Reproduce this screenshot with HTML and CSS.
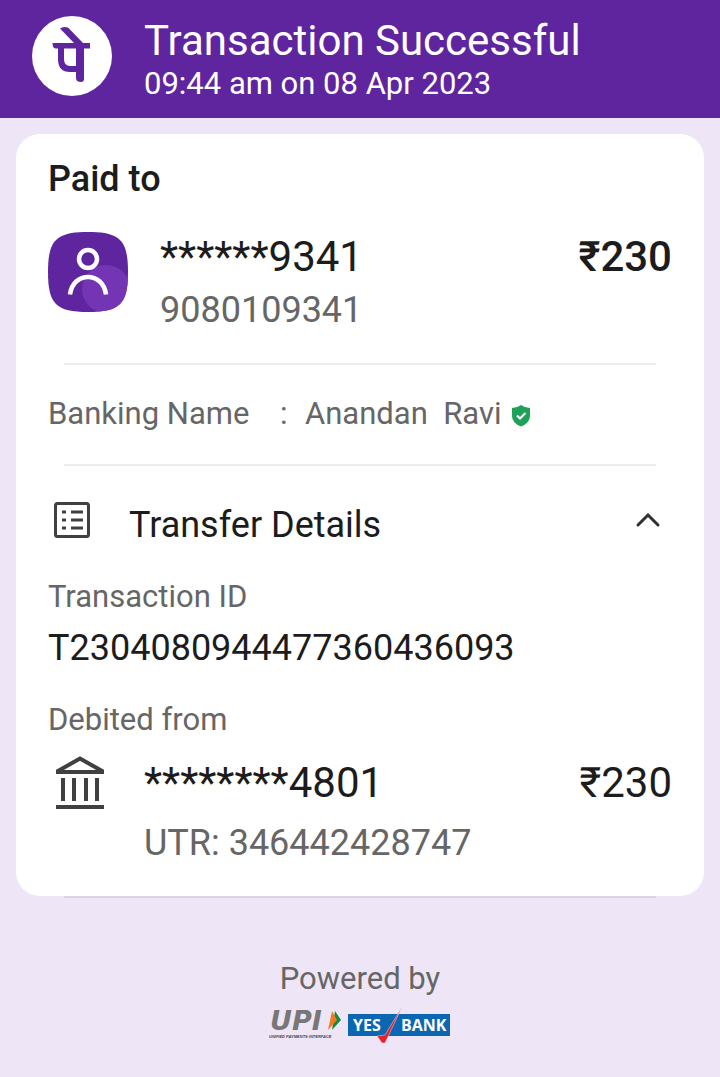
FILE: index.html
```html
<!DOCTYPE html>
<html lang="en">
<head>
<meta charset="utf-8">
<meta name="viewport" content="width=device-width, initial-scale=1">
<title>Transaction Successful</title>
<link rel="stylesheet" href="styles.css">
</head>
<body>
<header class="header">
  <svg class="logo" viewBox="0 0 80 80" aria-hidden="true">
    <circle cx="40" cy="40" r="40" fill="#fff"/>
    <path d="M28 12.500Q31 10 36 11.500L51 27H42Z" fill="#5f259f"/>
    <path d="M20.500 27H58V32.500H23.500Q20.500 32 20.500 27Z" fill="#5f259f"/>
    <path d="M29 32V43Q29 53 38 53H47" fill="none" stroke="#5f259f" stroke-width="6"/>
    <path d="M44 31H52V63Q52 66 49 66Q44 66 44 62Z" fill="#5f259f"/>
  </svg>
  <div class="heading">
    <h1 class="title">Transaction Successful</h1>
    <p class="time">09:44 am on 08 Apr 2023</p>
  </div>
</header>
<main class="card">
  <h2 class="label-strong">Paid to</h2>
  <section class="payee">
    <svg class="avatar" viewBox="0 0 80 80" aria-hidden="true">
      <defs><clipPath id="tile"><path d="M40 0C72 0 80 8 80 40S72 80 40 80S0 72 0 40S8 0 40 0Z"/></clipPath></defs>
      <g clip-path="url(#tile)">
        <rect width="80" height="80" fill="#5f259f"/>
        <circle cx="58" cy="57" r="24" fill="#7435b4"/>
      </g>
      <circle cx="40" cy="27" r="9" fill="none" stroke="#fff" stroke-width="4.500"/>
      <path d="M22 62.500C25 39 55 39 58 62.500" fill="none" stroke="#fff" stroke-width="4.500"/>
    </svg>
    <div class="info">
      <p class="name">******9341</p>
      <p class="sub">9080109341</p>
    </div>
    <p class="amount amount-strong">₹230</p>
  </section>
  <hr class="line">
  <section class="banking">
    <span class="banking-label">Banking Name</span>
    <span class="colon">:</span>
    <span class="banking-name">Anandan&nbsp; Ravi</span>
    <svg class="shield" viewBox="0 0 20 24" role="img" aria-label="Verified">
      <path d="M10 1Q14 4 19 4V12Q19 19 10 22.500Q1 19 1 12V4Q6 4 10 1Z" fill="#1fa15b"/>
      <path d="M6 11.500L9 14.500L14.500 9" fill="none" stroke="#fff" stroke-width="2"/>
    </svg>
  </section>
  <hr class="line">
  <section class="details">
    <button class="toggle" type="button" aria-expanded="true">
      <svg class="list-icon" viewBox="0 0 48 48" fill="none" stroke="#404040" stroke-width="3" aria-hidden="true">
        <rect x="7.500" y="7.500" width="33" height="33" rx="2"/>
        <path d="M14 16H18M23 16H35M14 24H18M23 24H35M14 32H18M23 32H35"/>
      </svg>
      <span class="toggle-text">Transfer Details</span>
      <svg class="chevron" viewBox="0 0 48 48" fill="none" stroke="#303030" stroke-width="3" stroke-linecap="round" aria-hidden="true"><path d="M14 29L24 19L34 29"/></svg>
    </button>
    <p class="field-label">Transaction ID</p>
    <p class="txn-id">T2304080944477360436093</p>
    <p class="field-label debit-label">Debited from</p>
    <div class="debit">
      <svg class="bank" viewBox="0 0 64 64" fill="none" stroke="#404040" aria-hidden="true">
        <path d="M10 20L32 7.500L54 20V21H10Z" stroke-width="4"/>
        <path d="M15 27V50M26 27V50M38 27V50M49 27V50M8 56H56" stroke-width="4"/>
      </svg>
      <div class="info">
        <p class="name">********4801</p>
        <p class="sub">UTR: 346442428747</p>
      </div>
      <p class="amount">₹230</p>
    </div>
  </section>
</main>
<hr class="line line-under">
<footer class="footer">
  <p class="powered">Powered by</p>
  <div class="brands">
    <svg class="upi" viewBox="0 0 76 40" role="img" aria-label="UPI Unified Payments Interface">
      <text class="upi-text" x="2" y="24">UPI</text>
      <path d="M67 5L73 14L64 24Z" fill="#128a44"/>
      <path d="M64 5L69 14L60 24Z" fill="#f47a20"/>
      <text class="upi-caption" x="1" y="32">UNIFIED PAYMENTS INTERFACE</text>
    </svg>
    <svg class="yes" viewBox="0 0 104 40" role="img" aria-label="YES BANK">
      <rect x="1" y="8" width="102" height="22" fill="#0c67b2"/>
      <text class="yes-text" x="6" y="25">YES</text>
      <text class="yes-text" x="54" y="25">BANK</text>
      <path d="M30 30L38 29L55 1L38 37H35Z" fill="#e42330" stroke="#f2dce8" stroke-width=".5"/>
    </svg>
  </div>
</footer>
</body>
</html>
```
FILE: styles.css
```css
* { box-sizing: border-box; }
body {
  margin: 0;
  min-height: 100vh;
  background: #eee6f6;
  color: #1c1c1c;
  font-family: Roboto, "Liberation Sans", sans-serif;
}
h1, h2, p { margin: 0; font-weight: 400; }
svg { display: block; flex: none; }
.header {
  display: flex;
  align-items: flex-start;
  gap: 32px;
  padding: 16px 32px;
  background: #5f259f;
  color: #fff;
}
.logo { width: 80px; height: 80px; }
.title { font-size: 42px; line-height: 50px; }
.time { font-size: 31px; line-height: 36px; }
.card {
  margin: 16px 16px 0;
  padding: 24px 32px 29px;
  border-radius: 24px;
  background: #fff;
}
.label-strong { font-size: 36px; line-height: 42px; font-weight: 500; }
.payee { display: flex; align-items: flex-start; margin-top: 28px; }
.avatar { width: 80px; height: 80px; margin: 4px 32px 0 0; }
.info { flex: 1; }
.name, .amount { font-size: 42px; line-height: 58px; }
.sub { font-size: 36px; line-height: 48px; color: #666; }
.amount-strong { font-weight: 500; }
.line { height: 2px; margin: 0 16px; border: 0; background: #ececec; }
.payee + .line { margin-top: 29px; }
.banking {
  display: flex;
  align-items: center;
  height: 99px;
  padding-bottom: 2px;
  font-size: 31px;
  color: #666;
}
.banking-label { width: 232px; }
.colon { width: 25px; }
.shield { width: 20px; height: 24px; margin: 4px 0 0 10px; }
.toggle {
  display: flex;
  align-items: center;
  width: 100%;
  margin-top: 30px;
  padding: 0;
  border: 0;
  background: none;
  color: inherit;
  font: inherit;
  text-align: left;
}
.list-icon, .chevron { width: 48px; height: 48px; }
.toggle-text { flex: 1; padding: 10px 0 0 33px; font-size: 36px; line-height: 38px; }
.field-label { margin-top: 33px; font-size: 31px; line-height: 40px; color: #666; }
.txn-id { margin-top: 7px; font-size: 36px; line-height: 48px; }
.debit-label { margin-top: 28px; }
.debit { display: flex; align-items: flex-start; margin-top: 11px; }
.debit .name, .debit .amount { line-height: 64px; }
.debit .sub { margin-top: 4px; }
.bank { width: 64px; height: 64px; margin-right: 32px; }
.line-under { margin: 0 64px; background: #dcd4e4; }
.footer { padding: 61px 16px 32px; text-align: center; }
.powered { font-size: 31px; line-height: 40px; color: #666; }
.brands { display: flex; justify-content: center; gap: 3px; margin-top: 7px; padding-right: 2px; }
.upi { width: 76px; height: 40px; }
.yes { width: 104px; height: 40px; }
.upi-text { font: italic 700 27px "DejaVu Sans", sans-serif; fill: #777; text-anchor: start; }
.upi-caption { font: italic 700 4px "Liberation Sans", sans-serif; fill: #444; }
.yes-text { font: 700 16px "Open Sans", sans-serif; fill: #fff; }
```
